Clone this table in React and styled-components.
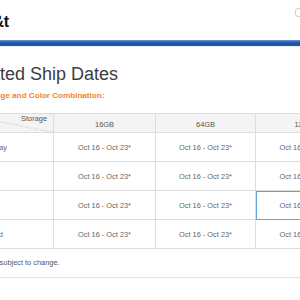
import React from 'react';
import styled, { createGlobalStyle } from 'styled-components';

const GlobalStyle = createGlobalStyle`
  html, body {
    margin: 0;
    padding: 0;
    background: #ffffff;
    overflow: hidden;
  }
  body {
    font-family: "Liberation Sans", Arial, sans-serif;
  }
`;

const Page = styled.div`
  width: 460px;
  margin-left: -53px;
`;

const TopBar = styled.header`
  display: flex;
  align-items: center;
  height: 40px;
  padding-left: 26px;
`;

const Brand = styled.div`
  margin-top: 4px;
  font-size: 16px;
  font-weight: 700;
  color: #111111;
  letter-spacing: -0.3px;
`;

const SearchBox = styled.div`
  margin-left: auto;
  margin-bottom: 15px;
  width: 110px;
  height: 7px;
  border: 1px solid #cfcfcf;
  border-radius: 3px;
`;

const BlueRule = styled.div`
  height: 6px;
  background: linear-gradient(#6d9bd6 0%, #2d67b8 30%, #1d4f9c 65%, #2a5aa3 100%);
  border-bottom: 1px solid #e6eef8;
`;

const Content = styled.main`
  padding-top: 16px;
`;

const Title = styled.h1`
  margin: 0;
  text-indent: -2px;
  font-size: 18px;
  line-height: 22px;
  font-weight: 400;
  color: #3d3d3d;
`;

const Subtitle = styled.p`
  margin: 6px 0 0;
  font-size: 8.1px;
  line-height: 10px;
  font-weight: 700;
  color: #f5821f;
`;

const Table = styled.table`
  margin: 12px 0 0 16px;
  border-collapse: collapse;
  table-layout: fixed;
  font-size: 7.4px;
  color: #666666;
`;

const HeadCell = styled.th`
  height: 16px;
  padding: 0 6px;
  border: 1px solid #dddddd;
  background: ${p => (p.$corner
    ? 'linear-gradient(to top right, #f4f4f4 calc(50% - 0.6px), #d0d0d0 50%, #f4f4f4 calc(50% + 0.6px))'
    : '#f4f4f4')};
  font-weight: 400;
  color: #555555;
  text-align: ${p => (p.$corner ? 'right' : 'center')};
  vertical-align: ${p => (p.$corner ? 'top' : 'middle')};
  line-height: 9px;
  padding-top: ${p => (p.$corner ? '0' : '2px')};
`;

const Cell = styled.td`
  height: 28px;
  padding: 0 6px 0 ${p => (p.$label ? '4px' : '6px')};
  border: 1px solid #dddddd;
  text-align: ${p => (p.$label ? 'left' : 'center')};
  white-space: nowrap;
  color: #666666;
  outline: ${p => (p.$active ? '1px solid #62a2d6' : 'none')};
  outline-offset: -1px;
`;

const Note = styled.p`
  margin: 9px 0 0;
  font-size: 7.4px;
  line-height: 10px;
  color: #555555;
`;

const Divider = styled.div`
  margin-top: 9px;
  border-top: 1px solid #e2e2e2;
`;

const sizes = ['16GB', '64GB', '128GB'];
const colors = ['Space Gray', 'Silver', 'Gold', 'Rose Gold'];
const shipDate = 'Oct 16 - Oct 23*';

const App = () => {
  return (
    <>
      <GlobalStyle />
      <Page>
        <TopBar>
          <Brand>AT&amp;t</Brand>
          <SearchBox />
        </TopBar>
        <BlueRule />
        <Content>
          <Title>Estimated Ship Dates</Title>
          <Subtitle>Select a Storage and Color Combination:</Subtitle>
          <Table>
            <colgroup>
              <col style={{ width: 90 }} />
              <col style={{ width: 102 }} />
              <col style={{ width: 100 }} />
              <col style={{ width: 101 }} />
            </colgroup>
            <thead>
              <tr>
                <HeadCell $corner>Storage</HeadCell>
                {sizes.map(size => (
                  <HeadCell key={size}>{size}</HeadCell>
                ))}
              </tr>
            </thead>
            <tbody>
              {colors.map((color, row) => (
                <tr key={color}>
                  <Cell $label>{color}</Cell>
                  {sizes.map((size, col) => (
                    <Cell key={size} $active={row === 2 && col === 2}>{shipDate}</Cell>
                  ))}
                </tr>
              ))}
            </tbody>
          </Table>
          <Note>*Ship dates are subject to change.</Note>
          <Divider />
        </Content>
      </Page>
    </>
  );
};

export default App;
